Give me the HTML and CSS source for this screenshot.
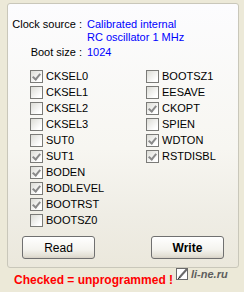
FILE: index.html
```html
<!DOCTYPE html>
<html lang="en">
<head>
  <meta charset="UTF-8">
  <title>Fuses</title>
  <link rel="stylesheet" href="styles.css">
</head>
<body>
  <div class="panel">
    <div class="info">
      <span class="info-label">Clock source :</span>
      <span class="info-value">Calibrated internal<br>RC oscillator 1 MHz</span>
      <span class="info-label boot">Boot size :</span>
      <span class="info-value boot">1024</span>
    </div>

    <div class="fuses">
      <div class="fuse-col">
        <label class="fuse"><span class="box checked"></span>CKSEL0</label>
        <label class="fuse"><span class="box"></span>CKSEL1</label>
        <label class="fuse"><span class="box"></span>CKSEL2</label>
        <label class="fuse"><span class="box"></span>CKSEL3</label>
        <label class="fuse"><span class="box"></span>SUT0</label>
        <label class="fuse"><span class="box checked"></span>SUT1</label>
        <label class="fuse"><span class="box checked"></span>BODEN</label>
        <label class="fuse"><span class="box checked"></span>BODLEVEL</label>
        <label class="fuse"><span class="box checked"></span>BOOTRST</label>
        <label class="fuse"><span class="box"></span>BOOTSZ0</label>
      </div>
      <div class="fuse-col">
        <label class="fuse"><span class="box"></span>BOOTSZ1</label>
        <label class="fuse"><span class="box"></span>EESAVE</label>
        <label class="fuse"><span class="box checked"></span>CKOPT</label>
        <label class="fuse"><span class="box"></span>SPIEN</label>
        <label class="fuse"><span class="box checked"></span>WDTON</label>
        <label class="fuse"><span class="box checked"></span>RSTDISBL</label>
      </div>
    </div>

    <div class="actions">
      <button class="btn">Read</button>
      <button class="btn btn-default">Write</button>
    </div>
  </div>

  <p class="note">Checked = unprogrammed !</p>

  <div class="logo">
    <svg width="13" height="14" viewBox="0 0 13 14">
      <rect x="0.5" y="1.5" width="11" height="11" fill="#fff" stroke="#6a6a6a"/>
      <path d="M3 11 L11 2" stroke="#6a6a6a" stroke-width="2" fill="none"/>
      <path d="M2 12 L4 10" stroke="#333" stroke-width="1" fill="none"/>
    </svg>
    <span>li-ne.ru</span>
  </div>
</body>
</html>
```

FILE: styles.css
```css
* {
  box-sizing: border-box;
  margin: 0;
  padding: 0;
}

body {
  font-family: 'Liberation Sans', Arial, sans-serif;
  font-size: 11px;
  color: #000;
  background-color: #ece9d8;
  width: 244px;
  height: 292px;
  position: relative;
  overflow: hidden;
}

.panel {
  margin: 3px 0 0 7px;
  width: 232px;
  height: 265px;
  border: 1px solid #c9c7ba;
  border-radius: 3px;
  background: linear-gradient(#fcfcfe, #f7f6f1 55%, #efede5 80%, #ebe8dc);
  padding-top: 14px;
}

.info {
  display: grid;
  grid-template-columns: 74px 1fr;
  column-gap: 5px;
  line-height: 13px;
}

.info-label {
  text-align: right;
}

.info-value {
  color: #0000ff;
}

.boot {
  margin-top: 2px;
}

.fuses {
  display: grid;
  grid-template-columns: 116px 1fr;
  padding-left: 22px;
  margin-top: 11px;
}

.fuse-col {
  display: flex;
  flex-direction: column;
  gap: 3px;
}

.fuse {
  display: flex;
  align-items: center;
  gap: 3px;
  height: 13px;
  line-height: 13px;
}

.box {
  width: 13px;
  height: 13px;
  border: 1px solid #7b7b78;
  background: linear-gradient(135deg, #dcdcd6, #fff 80%);
  flex-shrink: 0;
  position: relative;
}

.box.checked::after {
  content: '';
  position: absolute;
  left: 3px;
  top: 1px;
  width: 3px;
  height: 6px;
  border: solid #8a8a8a;
  border-width: 0 2px 2px 0;
  transform: rotate(40deg);
}

.actions {
  display: flex;
  justify-content: space-between;
  padding: 0 14px;
  margin-top: 9px;
}

.btn {
  width: 73px;
  height: 23px;
  border: 1px solid #707070;
  border-radius: 3px;
  background: linear-gradient(#ffffff, #f4f3ee 60%, #e3e0d5 90%, #d6d0c5);
  font-family: 'Liberation Sans', Arial, sans-serif;
  font-size: 12px;
  color: #000;
}

.btn-default {
  font-weight: bold;
}

.note {
  margin: 5px 0 0 14px;
  font-size: 12px;
  line-height: 14px;
  font-weight: bold;
  color: #ff0000;
}

.logo {
  position: absolute;
  left: 176px;
  top: 267px;
  display: flex;
  align-items: center;
  gap: 2px;
  font-size: 11px;
  font-weight: bold;
  font-style: italic;
  color: #5e5e5e;
}
```
